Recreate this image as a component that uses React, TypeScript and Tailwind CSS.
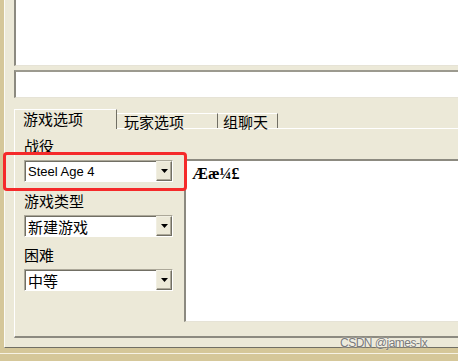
import { FunctionComponent } from "react";

type ComboProps = {
  value: string;
  latin?: boolean;
};

const Combo: FunctionComponent<ComboProps> = ({ value, latin = false }) => {
  return (
    <div className="flex h-[22px] w-[149px] border border-t-[#aca899] border-l-[#aca899] border-r-white border-b-white bg-white shadow-[inset_1px_1px_0_#716f64]">
      <div
        className={`flex flex-1 items-center pl-[3px] leading-none text-black ${
          latin
            ? "font-['Liberation_Sans',sans-serif] text-[13px]"
            : "font-['Noto_Sans_CJK_SC',sans-serif] text-[15px]"
        }`}
      >
        {value}
      </div>
      <div className="flex h-[20px] w-[16px] items-center justify-center border border-t-[#f1efe2] border-l-[#f1efe2] border-r-[#716f64] border-b-[#716f64] bg-[#ece9d8] shadow-[inset_-1px_-1px_0_#aca899]">
        <svg width="7" height="4" viewBox="0 0 7 4">
          <path d="M0 0h7L3.5 4z" fill="#000" />
        </svg>
      </div>
    </div>
  );
};

const Field: FunctionComponent<{ label: string; value: string; latin?: boolean; className?: string }> = ({
  label,
  value,
  latin,
  className = "",
}) => (
  <div className={`flex flex-col gap-[4px] ${className}`}>
    <div className="h-[20px] font-['Noto_Sans_CJK_SC',sans-serif] text-[15px] leading-[20px] text-black">
      {label}
    </div>
    <Combo value={value} latin={latin} />
  </div>
);

const App: FunctionComponent = () => {
  return (
    <div className="relative flex h-[361px] w-[458px] flex-col overflow-hidden bg-[#d5c799]">
      {/* dialog window */}
      <div className="ml-[4px] flex h-[348px] w-[520px] shrink-0 flex-col border-l border-b border-l-[#fbfaf5] border-b-[#716f64] bg-[#ece9d8] pl-[9px]">
        {/* chat log */}
        <div className="h-[66px] shrink-0 border-l-2 border-b border-l-[#8c8a80] border-b-[#e6e3d6] bg-white" />
        {/* chat input */}
        <div className="mt-[4px] h-[28px] shrink-0 border-t-2 border-l-2 border-b border-t-[#9c9a8f] border-l-[#8c8a80] border-b-[#e6e3d6] bg-white" />

        {/* tabs */}
        <div className="relative z-10 mt-[11px] flex h-[19px] shrink-0 items-start font-['Noto_Sans_CJK_SC',sans-serif] text-[15px] leading-[16px] text-black">
          <div className="h-[20px] w-[103px] border-t border-l border-r border-t-white border-l-white border-r-[#716f64] bg-[#ece9d8] pl-[8px] pt-[1px]">
            游戏选项
          </div>
          <div className="mt-[4px] h-[15px] w-[101px] whitespace-nowrap border-t border-r border-t-white border-r-[#716f64] pl-[7px]">
            玩家选项
          </div>
          <div className="mt-[4px] h-[15px] w-[60px] whitespace-nowrap border-t border-r border-t-white border-r-[#716f64] pl-[5px]">
            组聊天
          </div>
        </div>

        {/* tab panel */}
        <div className="flex h-[210px] shrink-0 border-t border-l border-b-2 border-t-white border-l-white border-b-[#8c8a80]">
          <div className="flex w-[169px] shrink-0 flex-col pl-[9px] pt-[7px]">
            <Field label="战役" value="Steel Age 4" latin />
            <Field label="游戏类型" value="新建游戏" className="mt-[9px]" />
            <Field label="困难" value="中等" className="mt-[8px]" />
          </div>
          <div className="mt-[30px] mb-[14px] flex-1 border-t-2 border-l-2 border-b border-t-[#8c8a80] border-l-[#8c8a80] border-b-[#e6e3d6] bg-white pl-[6px] pt-[4px]">
            <div className="font-['Liberation_Serif',serif] text-[16px] font-bold leading-[18px] text-black">
              Ææ¼£
            </div>
          </div>
        </div>
      </div>
      <div className="mt-[5px] h-px w-full shrink-0 bg-[#f6f2e4]" />

      {/* annotation */}
      <div className="absolute left-[3px] top-[152px] h-[39px] w-[184px] rounded-[4px] border-[3px] border-[#f52a2a]" />

      {/* watermark */}
      <div className="absolute left-[340px] top-[336px] font-['Liberation_Sans',sans-serif] text-[12px] leading-[15px] tracking-[-0.5px] text-[#7a7a7a] [text-shadow:0_0_2px_#ffffff]">
        CSDN @james-lx
      </div>
    </div>
  );
};

export default App;
